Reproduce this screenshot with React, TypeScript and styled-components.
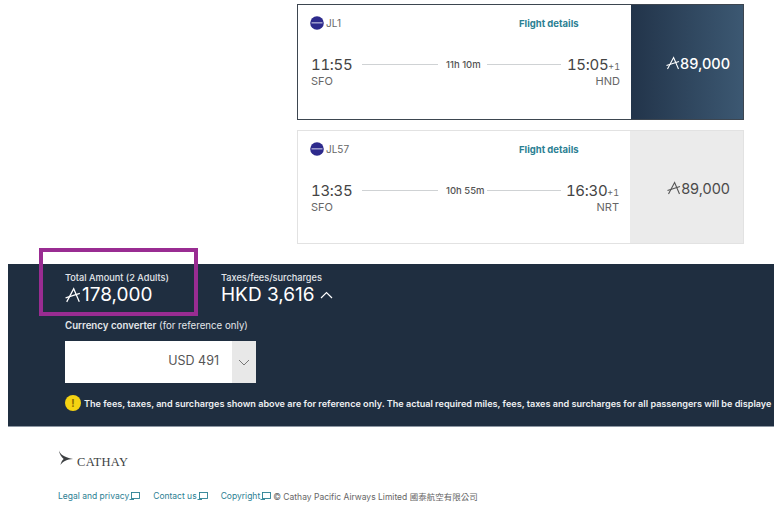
import React from "react";
import styled, { createGlobalStyle } from "styled-components";

const Global = createGlobalStyle`
  html, body { margin: 0; padding: 0; background: #fff; }
  body { font-family: Inter, "Noto Sans CJK TC", "Liberation Sans", sans-serif; width: 780px; height: 505px; overflow: hidden; }
`;

const Page = styled.div`
  position: relative;
  width: 780px;
  height: 505px;
  padding-top: 4px;
  box-sizing: border-box;
`;
const Flights = styled.div`
  display: flex;
  flex-direction: column;
  gap: 10px;
  width: 447px;
  margin-left: 297px;
`;
const Card = styled.div<{ $selected?: boolean }>`
  display: flex;
  height: ${p => (p.$selected ? 116 : 114)}px;
  box-sizing: border-box;
  border: ${p => (p.$selected ? "1px solid #3d4650" : "1px solid #e2e2e2")};
`;
const Info = styled.div`
  flex: 1;
  padding: 11px 11px 0 13px;
  display: flex;
  flex-direction: column;
  background: #fff;
`;
const TopRow = styled.div`
  display: flex;
  align-items: center;
  height: 14px;
`;
const FlightNo = styled.span`
  font-size: 10px;
  color: #666;
  margin-left: 2px;
  width: 193px;
`;
const Details = styled.span`
  font-size: 9.5px;
  font-weight: 700;
  color: #2b8093;
  white-space: nowrap;
`;
const Route = styled.div`
  display: grid;
  grid-template-columns: 51px 76px 49px 74px 1fr;
  margin-top: 24px;
  align-items: center;
  height: 20px;
`;
const Time = styled.span`
  font-size: 15px;
  letter-spacing: -0.3px;
  color: #444;
  white-space: nowrap;
  font-variant-numeric: tabular-nums;
`;
const ArrivalTime = styled(Time)`
  justify-self: end;
`;
const Plus = styled.span`
  font-size: 9px;
  letter-spacing: 0;
  color: #666;
`;
const Line = styled.span`
  height: 1px;
  background: #cfd2d4;
`;
const Duration = styled.span`
  font-size: 9.5px;
  font-weight: 500;
  color: #555;
  padding-left: 8px;
  white-space: nowrap;
`;
const Airports = styled.div`
  display: flex;
  justify-content: space-between;
  font-size: 11px;
  color: #666;
`;
const Price = styled.div<{ $selected?: boolean }>`
  width: ${p => (p.$selected ? 112 : 113)}px;
  display: flex;
  align-items: center;
  justify-content: flex-end;
  padding: 2px 13px 0 0;
  box-sizing: border-box;
  font-size: 14.5px;
  font-weight: ${p => (p.$selected ? 500 : 400)};
  color: ${p => (p.$selected ? "#fff" : "#4a4a4a")};
  background: ${p => (p.$selected ? "linear-gradient(90deg, #22344a, #3c5872)" : "#ebebeb")};
`;
const Band = styled.div`
  width: 766px;
  height: 163px;
  margin: 20px 0 0 8px;
  background: #1f2e40;
  border-bottom: 1px solid #8d97a3;
  box-sizing: border-box;
  padding: 8px 0 0 57px;
  overflow: hidden;
  color: #fff;
`;
const Totals = styled.div`
  display: flex;
`;
const Total = styled.div<{ $w: number }>`
  width: ${p => p.$w}px;
`;
const Label = styled.div`
  font-size: 9.2px;
  font-weight: 500;
  line-height: 12px;
  color: #e3e6ea;
  white-space: nowrap;
`;
const Amount = styled.div<{ $gap: number }>`
  font-size: 19px;
  line-height: 22px;
  color: #fff;
  display: flex;
  align-items: center;
  gap: ${p => p.$gap}px;
  white-space: nowrap;
`;
const ConverterLabel = styled.div`
  font-size: 9.7px;
  line-height: 14px;
  margin-top: 13px;
  color: #e3e6ea;
  b { font-weight: 600; }
`;
const Select = styled.div`
  display: flex;
  width: 191px;
  height: 42px;
  margin-top: 8px;
  background: #fff;
`;
const SelectValue = styled.div`
  flex: 1;
  text-align: right;
  padding-right: 13px;
  line-height: 40px;
  font-size: 12.5px;
  color: #555;
`;
const SelectArrow = styled.div`
  width: 24px;
  background: #e8e8e8;
  display: flex;
  align-items: center;
  justify-content: center;
`;
const Notice = styled.div`
  display: flex;
  align-items: center;
  gap: 3px;
  margin-top: 12px;
  font-size: 9.1px;
  font-weight: 600;
  white-space: nowrap;
  color: #eef0f2;
`;
const NoticeIcon = styled.span`
  flex: none;
  width: 16px;
  height: 16px;
  border-radius: 50%;
  background: #f5d312;
  color: #8a6a00;
  font-size: 10px;
  font-weight: 700;
  text-align: center;
  line-height: 16px;
`;
const Highlight = styled.div`
  position: absolute;
  left: 39px;
  top: 248px;
  width: 159px;
  height: 68px;
  box-sizing: border-box;
  border: 4px solid #992c92;
`;
const Footer = styled.div`
  margin: 24px 0 0 58px;
`;
const Brand = styled.div`
  display: flex;
  align-items: flex-start;
  gap: 3px;
  height: 22px;
  font-family: "Liberation Serif", serif;
  font-size: 12.5px;
  letter-spacing: 0.3px;
  color: #3c3f42;
`;
const Wordmark = styled.span`
  padding-top: 4px;
`;
const Links = styled.div`
  display: flex;
  align-items: center;
  margin-top: 17px;
  font-size: 8.5px;
  color: #666;
  white-space: nowrap;
`;
const FooterLink = styled.span<{ $gap: number }>`
  display: inline-flex;
  align-items: center;
  color: #2b8093;
  margin-right: ${p => p.$gap}px;
`;

const Miles = ({ size, color }: { size: number; color: string }) => (
  <svg width={size} height={size} viewBox="0 0 14 14" fill="none" stroke={color} strokeWidth="1.1" style={{ flex: "none" }}>
    <path d="M1.5 13 L7.6 1.5 L12.5 13" />
    <path d="M0.5 9.5 L13 5.5" />
  </svg>
);

const AirlineLogo = () => (
  <svg width="14" height="14" viewBox="0 0 14 14" style={{ flex: "none", marginLeft: -1 }}>
    <circle cx="7" cy="7" r="6.8" fill="#2d2a8c" />
    <rect x="1.5" y="6.3" width="11" height="1.1" fill="#c9c9e6" />
  </svg>
);

const Ext = () => (
  <svg width="11" height="10" viewBox="0 0 11 10" fill="none" stroke="#2b8093" strokeWidth="0.9">
    <rect x="2.5" y="1.5" width="8" height="6" />
    <path d="M0.5 8.5 H5" />
  </svg>
);

const Tail = () => (
  <svg width="16" height="16" viewBox="0 0 16 17" fill="#3c3f42" style={{ flex: "none", marginTop: -1 }}>
    <path d="M0.5 0.5 C2 4 4.5 7.5 15.5 9.5 C9 10 5 11.5 2 16 C3 12.5 4 11 5.5 9.5 C3 7.5 1 4 0.5 0.5 Z" />
  </svg>
);

const FlightCard = ({ no, dep, arr, dur, to, selected }: { no: string; dep: string; arr: string; dur: string; to: string; selected?: boolean }) => (
  <Card $selected={selected}>
    <Info>
      <TopRow>
        <AirlineLogo />
        <FlightNo>{no}</FlightNo>
        <Details>Flight details</Details>
      </TopRow>
      <Route>
        <Time>{dep}</Time>
        <Line />
        <Duration>{dur}</Duration>
        <Line />
        <ArrivalTime>{arr}<Plus>+1</Plus></ArrivalTime>
      </Route>
      <Airports><span>SFO</span><span>{to}</span></Airports>
    </Info>
    <Price $selected={selected}>
      <Miles size={14} color={selected ? "#fff" : "#555"} />
      89,000
    </Price>
  </Card>
);

export default function App() {
  return (
    <Page>
      <Global />
      <Flights>
        <FlightCard selected no="JL1" dep="11:55" arr="15:05" dur="11h 10m" to="HND" />
        <FlightCard no="JL57" dep="13:35" arr="16:30" dur="10h 55m" to="NRT" />
      </Flights>
      <Band>
        <Totals>
          <Total $w={156}>
            <Label>Total Amount (2 Adults)</Label>
            <Amount $gap={1}>
              <Miles size={16} color="#fff" />
              178,000
            </Amount>
          </Total>
          <Total $w={200}>
            <Label>Taxes/fees/surcharges</Label>
            <Amount $gap={5}>
              HKD 3,616
              <svg width="13" height="8" viewBox="0 0 13 8" fill="none" stroke="#fff" strokeWidth="1.2"><path d="M1 7 L6.5 1.5 L12 7" /></svg>
            </Amount>
          </Total>
        </Totals>
        <ConverterLabel><b>Currency converter</b> (for reference only)</ConverterLabel>
        <Select>
          <SelectValue>USD 491</SelectValue>
          <SelectArrow>
            <svg width="12" height="7" viewBox="0 0 12 7" fill="none" stroke="#777" strokeWidth="1"><path d="M1 1 L6 6 L11 1" /></svg>
          </SelectArrow>
        </Select>
        <Notice>
          <NoticeIcon>!</NoticeIcon>
          The fees, taxes, and surcharges shown above are for reference only. The actual required miles, fees, taxes and surcharges for all passengers will be displaye
        </Notice>
      </Band>
      <Footer>
        <Brand><Tail /><Wordmark>CATHAY</Wordmark></Brand>
        <Links>
          <FooterLink $gap={13}>Legal and privacy<Ext /></FooterLink>
          <FooterLink $gap={13}>Contact us<Ext /></FooterLink>
          <FooterLink $gap={2}>Copyright<Ext /></FooterLink>
          <span>© Cathay Pacific Airways Limited 國泰航空有限公司</span>
        </Links>
      </Footer>
      <Highlight />
    </Page>
  );
}
